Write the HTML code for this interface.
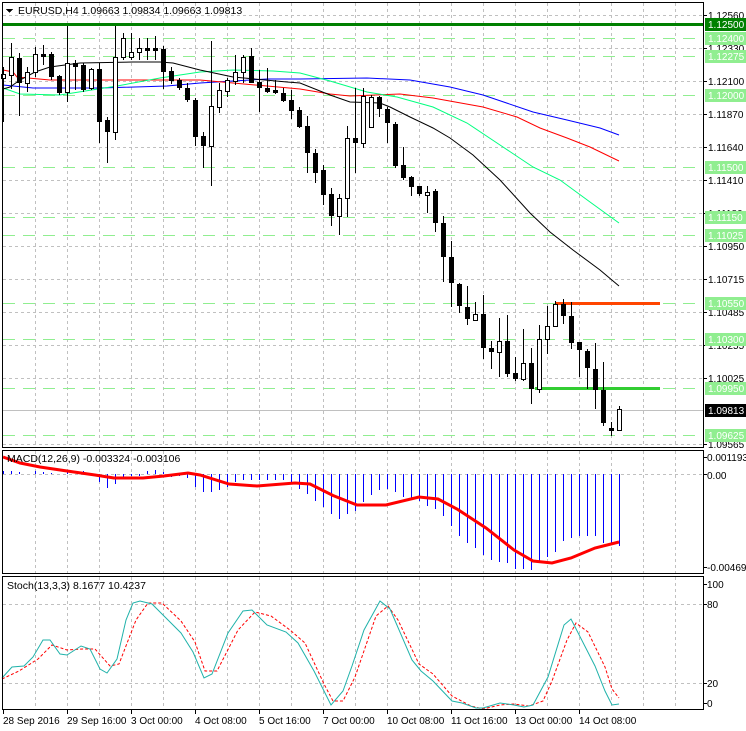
<!DOCTYPE html>
<html><head><meta charset="utf-8"><style>
html,body{margin:0;padding:0;background:#fff;width:746px;height:731px;overflow:hidden}
svg{display:block}
text{font-family:"Liberation Sans",sans-serif;font-size:10px;fill:#000}
.t{font-size:10.5px}
.g{stroke:#c0c0c0;stroke-width:1;stroke-dasharray:3,3;fill:none}
.lg{stroke:#90ee90;stroke-width:1;stroke-dasharray:12,8;fill:none}
.w{stroke:#000;stroke-width:1}
.wb{fill:#fff;stroke:#000;stroke-width:1}
.bb{fill:#000}
.h{stroke:#0000ff;stroke-width:1}
</style></head><body>
<svg width="746" height="731" viewBox="0 0 746 731" xmlns="http://www.w3.org/2000/svg" shape-rendering="crispEdges">
<g class="g">
<path d="M35.5 3V447M67.5 3V447M99.5 3V447M131.5 3V447M163.5 3V447M195.5 3V447M227.5 3V447M259.5 3V447M291.5 3V447M323.5 3V447M355.5 3V447M387.5 3V447M419.5 3V447M451.5 3V447M483.5 3V447M515.5 3V447M547.5 3V447M579.5 3V447M611.5 3V447M643.5 3V447M675.5 3V447"/>
<path d="M35.5 451V573M67.5 451V573M99.5 451V573M131.5 451V573M163.5 451V573M195.5 451V573M227.5 451V573M259.5 451V573M291.5 451V573M323.5 451V573M355.5 451V573M387.5 451V573M419.5 451V573M451.5 451V573M483.5 451V573M515.5 451V573M547.5 451V573M579.5 451V573M611.5 451V573M643.5 451V573M675.5 451V573"/>
<path d="M35.5 577V709M67.5 577V709M99.5 577V709M131.5 577V709M163.5 577V709M195.5 577V709M227.5 577V709M259.5 577V709M291.5 577V709M323.5 577V709M355.5 577V709M387.5 577V709M419.5 577V709M451.5 577V709M483.5 577V709M515.5 577V709M547.5 577V709M579.5 577V709M611.5 577V709M643.5 577V709M675.5 577V709"/>
<path d="M3 15.5H703M3 48.5H703M3 81.5H703M3 114.5H703M3 147.5H703M3 180.5H703M3 213.5H703M3 246.5H703M3 279.5H703M3 312.5H703M3 345.5H703M3 378.5H703M3 444.5H703"/>
<path d="M3 474.5H703M3 604.5H703M3 683.5H703"/>
</g>
<g class="lg">
<path d="M3 38.5H703M3 56.5H703M3 95.5H703M3 167.5H703M3 217.5H703M3 235.5H703M3 303.5H703M3 339.5H703M3 388.5H703M3 435.5H703"/>
</g>
<path d="M3 410.5H703" stroke="#c0c0c0" stroke-width="1"/>
<rect x="3" y="23" width="700" height="3" fill="#008000"/>
<g fill="none" stroke-width="1" shape-rendering="auto">
<polyline stroke="#0000ff" points="3,85 33,88 100,88 167,86 200,83 233,81 267,79 300,79 367,78 410,80 450,87 483,95 533,112 567,120 600,128 619,135"/>
<polyline stroke="#ff0000" points="3,70 13,72 17,77 50,80 100,80 167,80 200,80 233,83 267,86 300,89 330,94 350,96 400,94 433,98 483,107 517,117 540,128 567,138 590,147 619,161"/>
<polyline stroke="#00ff7f" points="3,88 20,94 60,95 117,86 160,78 200,72 233,70 273,71 300,73 330,81 367,92 397,97 433,107 467,123 500,145 533,167 560,180 590,202 619,223"/>
<polyline stroke="#000000" points="3,89 10,87 20,80 35,72 50,67 80,63 133,62 160,62 173,63 200,70 233,77 287,82 300,83 330,95 350,102 380,103 390,107 410,117 433,128 450,138 473,155 500,180 530,213 550,232 573,250 600,270 619,286"/>
</g>
<rect x="555" y="302" width="105" height="3" fill="#ff4500"/>
<rect x="535" y="387" width="125" height="3" fill="#32cd32"/>
<g class="w">
<path d="M3.5 67V122M11.5 43V89M19.5 53V116M27.5 67V92M35.5 47V77M43.5 45V65M51.5 52V80M59.5 75V95M67.5 26V102M75.5 60V90M83.5 63V92M91.5 68V90M99.5 63V143M107.5 117V163M115.5 26V140M123.5 33V60M131.5 33V60M139.5 38V60M147.5 38V60M155.5 36V60M163.5 46V89M171.5 67V84M179.5 78V90M187.5 83V102M195.5 98V146M203.5 132V168M211.5 41V186M219.5 83V113M227.5 78V97M235.5 55V85M243.5 55V83M251.5 48V83M259.5 70V112M267.5 68V93M275.5 80V94M283.5 88V102M291.5 90V119M299.5 107V128M307.5 116V173M315.5 149V183M323.5 165V205M331.5 188V226M339.5 194V235M347.5 126V217M355.5 88V173M363.5 88V148M371.5 95V127M379.5 96V117M387.5 107V143M395.5 122V168M403.5 147V180M411.5 176V196M419.5 186V196M427.5 186V213M435.5 189V232M443.5 216V282M451.5 241V307M459.5 283V313M467.5 286V325M475.5 302V321M483.5 295V359M491.5 341V369M499.5 318V377M507.5 315V377M515.5 357V381M523.5 329V381M531.5 348V404M539.5 325V393M547.5 306V354M555.5 301V327M563.5 299V324M571.5 302V349M579.5 342V377M587.5 349V389M595.5 343V409M603.5 362V426M611.5 422V436M619.5 406V431"/>
</g>
<g class="bb">
<rect x="17" y="58" width="5" height="25"/><rect x="41" y="54" width="5" height="3"/><rect x="49" y="54" width="5" height="23"/><rect x="57" y="76" width="5" height="17"/><rect x="73" y="63" width="5" height="4"/><rect x="81" y="65" width="5" height="25"/><rect x="97" y="69" width="5" height="53"/><rect x="105" y="120" width="5" height="12"/><rect x="145" y="48" width="5" height="3"/><rect x="153" y="48" width="5" height="3"/><rect x="161" y="49" width="5" height="23"/><rect x="169" y="71" width="5" height="10"/><rect x="177" y="80" width="5" height="8"/><rect x="185" y="88" width="5" height="12"/><rect x="193" y="100" width="5" height="37"/><rect x="201" y="136" width="5" height="10"/><rect x="249" y="56" width="5" height="27"/><rect x="257" y="82" width="5" height="6"/><rect x="265" y="88" width="5" height="4"/><rect x="273" y="90" width="5" height="3"/><rect x="281" y="93" width="5" height="8"/><rect x="289" y="100" width="5" height="11"/><rect x="297" y="110" width="5" height="17"/><rect x="305" y="126" width="5" height="27"/><rect x="313" y="153" width="5" height="20"/><rect x="321" y="170" width="5" height="25"/><rect x="329" y="194" width="5" height="22"/><rect x="353" y="138" width="5" height="5"/><rect x="377" y="97" width="5" height="12"/><rect x="385" y="109" width="5" height="14"/><rect x="393" y="124" width="5" height="42"/><rect x="401" y="165" width="5" height="13"/><rect x="409" y="177" width="5" height="10"/><rect x="417" y="186" width="5" height="8"/><rect x="433" y="191" width="5" height="32"/><rect x="441" y="223" width="5" height="34"/><rect x="449" y="257" width="5" height="26"/><rect x="457" y="284" width="5" height="22"/><rect x="465" y="307" width="5" height="12"/><rect x="481" y="314" width="5" height="34"/><rect x="489" y="348" width="5" height="4"/><rect x="505" y="341" width="5" height="33"/><rect x="513" y="373" width="5" height="6"/><rect x="529" y="363" width="5" height="26"/><rect x="561" y="304" width="5" height="12"/><rect x="569" y="316" width="5" height="27"/><rect x="577" y="342" width="5" height="8"/><rect x="585" y="351" width="5" height="17"/><rect x="593" y="369" width="5" height="21"/><rect x="601" y="390" width="5" height="33"/><rect x="609" y="428" width="5" height="3"/>
</g>
<g class="wb">
<rect x="1.5" y="74.5" width="4" height="4"/><rect x="9.5" y="57.5" width="4" height="18"/><rect x="25.5" y="72.5" width="4" height="11"/><rect x="33.5" y="54.5" width="4" height="18"/><rect x="65.5" y="63.5" width="4" height="29"/><rect x="89.5" y="69.5" width="4" height="19"/><rect x="113.5" y="57.5" width="4" height="75"/><rect x="121.5" y="38.5" width="4" height="19"/><rect x="129.5" y="52.5" width="4" height="5"/><rect x="137.5" y="48.5" width="4" height="4"/><rect x="209.5" y="106.5" width="4" height="40"/><rect x="217.5" y="90.5" width="4" height="17"/><rect x="225.5" y="80.5" width="4" height="11"/><rect x="233.5" y="72.5" width="4" height="9"/><rect x="241.5" y="57.5" width="4" height="15"/><rect x="337.5" y="198.5" width="4" height="18"/><rect x="345.5" y="138.5" width="4" height="60"/><rect x="361.5" y="96.5" width="4" height="47"/><rect x="369.5" y="97.5" width="4" height="30"/><rect x="425.5" y="192.5" width="4" height="3"/><rect x="473.5" y="314.5" width="4" height="6"/><rect x="497.5" y="341.5" width="4" height="11"/><rect x="521.5" y="363.5" width="4" height="16"/><rect x="537.5" y="339.5" width="4" height="50"/><rect x="545.5" y="326.5" width="4" height="13"/><rect x="553.5" y="304.5" width="4" height="22"/><rect x="617.5" y="409.5" width="4" height="21"/>
</g>
<path class="h" d="M3.5 474V471M11.5 474V471M19.5 474V472M35.5 474V471M43.5 474V472M51.5 474V473M67.5 474V472M83.5 474V471M99.5 474V482M107.5 474V488M115.5 474V484M123.5 474V479M131.5 474V476M139.5 474V476M147.5 474V471M155.5 474V470M163.5 474V472M171.5 474V477M179.5 474V476M187.5 474V478M195.5 474V487M203.5 474V492M211.5 474V492M219.5 474V490M227.5 474V487M235.5 474V482M243.5 474V480M251.5 474V480M259.5 474V480M267.5 474V480M275.5 474V480M283.5 474V480M291.5 474V483M299.5 474V489M307.5 474V494M315.5 474V501M323.5 474V507M331.5 474V514M339.5 474V519M347.5 474V514M355.5 474V511M363.5 474V502M371.5 474V495M379.5 474V490M387.5 474V489M395.5 474V492M403.5 474V497M411.5 474V499M419.5 474V501M427.5 474V506M435.5 474V509M443.5 474V516M451.5 474V526M459.5 474V536M467.5 474V543M475.5 474V548M483.5 474V555M491.5 474V560M499.5 474V562M507.5 474V563M515.5 474V569M523.5 474V569M531.5 474V570M539.5 474V562M547.5 474V557M555.5 474V552M563.5 474V541M571.5 474V538M579.5 474V536M587.5 474V536M595.5 474V536M603.5 474V543M611.5 474V543M619.5 474V546"/>
<polyline fill="none" stroke="#ff0000" stroke-width="3" shape-rendering="auto" points="3,457 20,463 40,467 67,471 95,475 114,478 143,478 164,476 188,473 200,475 229,484 257,486 295,483 310,484 333,495.5 357,505 386,505 419,497 438,499 457,509 486,528 514,550 533,561 552,563 571,558 595,548 619,542"/>
<polyline fill="none" stroke="#ff0000" stroke-width="1" stroke-dasharray="3,2" shape-rendering="auto" points="2,679 19,671 38,659 52,645 67,650 83,649 95,649 110,666 119,664 136,620 148,603 162,603 181,621 195,642 205,671 217,671 238,630 255,612 271,616 290,630 305,643 324,684 333,701 343,701 355,677 376,616 388,606 398,620 419,664 433,674 452,696 471,706 483,709 500,705 514,704 529,706 543,701 552,681 567,640 576,623 588,632 605,667 612,689 619,698"/>
<polyline fill="none" stroke="#20b2aa" stroke-width="1" shape-rendering="auto" points="2,678 12,667 24,666 33,657 43,640 50,640 60,654 67,655 81,646 90,649 100,669 107,673 117,659 126,620 133,603 140,601 152,604 164,616 181,633 193,652 204,678 212,674 228,633 243,611 252,610 267,625 286,632 298,643 314,671 331,705 343,691 352,666 364,630 380,601 390,609 412,660 421,671 433,681 452,701 462,703 476,708 483,708 500,703 514,705 524,707 533,705 548,677 564,625 571,619 595,666 605,691 612,705 619,704"/>
<g fill="none" stroke="#000" stroke-width="1">
<rect x="2.5" y="2.5" width="701" height="445"/>
<rect x="2.5" y="450.5" width="701" height="123"/>
<rect x="2.5" y="576.5" width="701" height="133"/>
</g>
<path stroke="#000" d="M703 15.5h4M703 48.5h4M703 81.5h4M703 114.5h4M703 147.5h4M703 180.5h4M703 213.5h4M703 246.5h4M703 279.5h4M703 312.5h4M703 345.5h4M703 378.5h4M703 444.5h4M703 457.5h4M703 474.5h4M703 567.5h4M703 584.5h4M703 604.5h4M703 683.5h4M703 703.5h4M3.5 709v5M67.5 709v5M131.5 709v5M195.5 709v5M259.5 709v5M323.5 709v5M387.5 709v5M451.5 709v5M515.5 709v5M579.5 709v5"/>
<text x="708" y="19">1.12560</text>
<text x="708" y="52">1.12330</text>
<text x="708" y="85">1.12100</text>
<text x="708" y="118">1.11870</text>
<text x="708" y="151">1.11640</text>
<text x="708" y="184">1.11410</text>
<text x="708" y="217">1.11180</text>
<text x="708" y="250">1.10950</text>
<text x="708" y="283">1.10715</text>
<text x="708" y="316">1.10485</text>
<text x="708" y="349">1.10255</text>
<text x="708" y="382">1.10025</text>
<text x="708" y="448">1.09565</text>
<g fill="#90ee90">
<rect x="705" y="32" width="41" height="13"/><rect x="705" y="50" width="41" height="13"/><rect x="705" y="89" width="41" height="13"/><rect x="705" y="161" width="41" height="13"/><rect x="705" y="211" width="41" height="13"/><rect x="705" y="229" width="41" height="13"/><rect x="705" y="297" width="41" height="13"/><rect x="705" y="333" width="41" height="13"/><rect x="705" y="382" width="41" height="13"/><rect x="705" y="429" width="41" height="13"/>
</g>
<rect x="705" y="18" width="41" height="13" fill="#008000"/>
<rect x="705" y="404" width="41" height="13" fill="#000"/>
<text x="708" y="28" style="fill:#fff">1.12500</text>
<text x="708" y="42" style="fill:#fff">1.12400</text>
<text x="708" y="60" style="fill:#fff">1.12275</text>
<text x="708" y="99" style="fill:#fff">1.12000</text>
<text x="708" y="171" style="fill:#fff">1.11500</text>
<text x="708" y="221" style="fill:#fff">1.11150</text>
<text x="708" y="239" style="fill:#fff">1.11025</text>
<text x="708" y="307" style="fill:#fff">1.10550</text>
<text x="708" y="343" style="fill:#fff">1.10300</text>
<text x="708" y="392" style="fill:#fff">1.09950</text>
<text x="708" y="414" style="fill:#fff">1.09813</text>
<text x="708" y="439" style="fill:#fff">1.09625</text>
<text x="707" y="461">0.001193</text>
<text x="707" y="479">0.00</text>
<text x="707" y="571">-0.004698</text>
<text x="707" y="588">100</text>
<text x="707" y="608">80</text>
<text x="707" y="687">20</text>
<text x="707" y="707">0</text>
<path d="M6 9h7l-3.5 4z" fill="#000"/>
<text class="t" x="18" y="14">EURUSD,H4  1.09663 1.09834 1.09663 1.09813</text>
<text class="t" x="7" y="462">MACD(12,26,9) -0.003324 -0.003106</text>
<text class="t" x="7" y="589">Stoch(13,3,3) 8.1677 10.4237</text>
<text x="3" y="724">28 Sep 2016</text>
<text x="67" y="724">29 Sep 16:00</text>
<text x="131" y="724">3 Oct 00:00</text>
<text x="195" y="724">4 Oct 08:00</text>
<text x="259" y="724">5 Oct 16:00</text>
<text x="323" y="724">7 Oct 00:00</text>
<text x="387" y="724">10 Oct 08:00</text>
<text x="451" y="724">11 Oct 16:00</text>
<text x="515" y="724">13 Oct 00:00</text>
<text x="579" y="724">14 Oct 08:00</text>
</svg>
</body></html>
